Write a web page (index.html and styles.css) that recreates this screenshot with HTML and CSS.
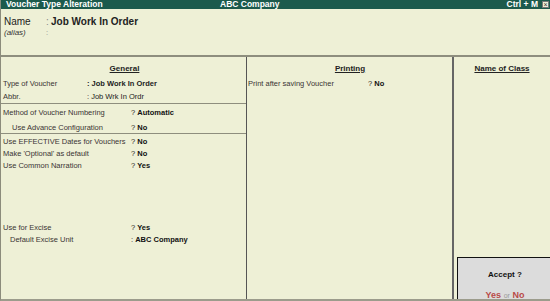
FILE: index.html
```html
<!doctype html>
<html lang="en">
<head>
    <meta charset="UTF-8">
    <title>Voucher Type Alteration</title>
    <link rel="stylesheet" href="styles.css">
</head>
<body>
<div class="win">
    <div class="titlebar">
        <span class="t-left">Voucher Type Alteration</span>
        <span class="t-mid">ABC Company</span>
        <span class="t-right">Ctrl + M <span class="close">&#215;</span></span>
    </div>
    <div class="head">
        <div class="nrow"><span class="nlab">Name</span><span class="ncol">:</span><span class="nval">Job Work In Order</span></div>
        <div class="arow"><span class="nlab alias">(alias)</span><span class="ncol">:</span></div>
    </div>
    <div class="cols">
        <div class="col gen">
            <div class="sec s1">
                <p class="ctitle">General</p>
                <div class="row"><span class="lab w84">Type of Voucher</span><span class="b">: Job Work In Order</span></div>
                <div class="row"><span class="lab w84">Abbr.</span><span>: Job Wrk In Ordr</span></div>
            </div>
            <div class="sec s2">
                <div class="row"><span class="lab w128">Method of Voucher Numbering</span><span>? <b>Automatic</b></span></div>
                <div class="row r2 ind"><span class="lab w119">Use Advance Configuration</span><span>? <b>No</b></span></div>
            </div>
            <div class="sec s3">
                <div class="row"><span class="lab w128">Use EFFECTIVE Dates for Vouchers</span><span>? <b>No</b></span></div>
                <div class="row"><span class="lab w128">Make 'Optional' as default</span><span>? <b>No</b></span></div>
                <div class="row"><span class="lab w128">Use Common Narration</span><span>? <b>Yes</b></span></div>
                <div class="row excise"><span class="lab w128">Use for Excise</span><span>? <b>Yes</b></span></div>
                <div class="row ind2"><span class="lab w121">Default Excise Unit</span><span>: <b>ABC Company</b></span></div>
            </div>
        </div>
        <div class="col prn">
            <p class="ctitle">Printing</p>
            <div class="row"><span class="lab w120">Print after saving Voucher</span><span>? <b>No</b></span></div>
        </div>
        <div class="col cls">
            <p class="ctitle">Name of Class</p>
        </div>
    </div>
    <div class="accept">
        <p class="q">Accept ?</p>
        <p class="yn"><b>Yes</b> <span class="or">or</span> <b>No</b></p>
    </div>
</div>
</body>
</html>
```

FILE: styles.css
```css
*{margin:0;padding:0;box-sizing:border-box;}
body{background:#eef0d6;font-family:"Liberation Sans",Arial,sans-serif;font-size:7.5px;color:#222;}
.win{width:550px;height:301px;position:relative;border-left:1px solid #8c8c7c;border-bottom:2px solid #9c9c8c;overflow:hidden;}
.titlebar{height:9px;background:#1c5a4c;color:#fff;font-weight:bold;font-size:8.5px;line-height:9px;display:flex;align-items:center;padding-left:5px;position:relative;}
.t-left{flex:1;}
.t-mid{position:absolute;left:219px;top:0;}
.t-right{display:flex;align-items:center;gap:4px;padding-right:1px;}
.close{display:inline-block;width:7px;height:7px;background:#eef0d6;color:#333;border:1px solid #777;font-size:7px;line-height:5px;text-align:center;font-weight:normal;}
.head{height:48px;padding:7px 0 0 3px;border-bottom:2px solid #8e8e7e;}
.nrow{display:flex;align-items:baseline;font-size:10px;line-height:12px;}
.nlab{width:42px;}
.ncol{width:5px;color:#888;}
.nval{font-weight:bold;font-size:10px;}
.arow{display:flex;line-height:9px;}
.alias{font-style:italic;font-size:8px;color:#333;}
.cols{display:flex;height:242px;}
.col{height:100%;padding-top:6px;}
.gen{width:246px;border-right:1px solid #555;padding-top:0;}
.prn{width:207px;border-right:2px solid #666;padding-left:1px;}
.cls{flex:1;}
.ctitle{text-align:center;font-weight:bold;font-size:8px;text-decoration:underline;color:#222;line-height:11px;}
.sec{padding-left:2px;}
.sec + .sec{border-top:1px solid #8e8e7e;}
.s1{height:46px;padding-top:6px;}
.s1 .ctitle{margin-bottom:3px;}
.row{display:flex;line-height:12px;white-space:nowrap;}
.s1 .row{line-height:13px;}
.lab{color:#3a3434;}
.w84{width:84px;}
.w128{width:128px;}
.w119{width:119px;}
.w121{width:121px;}
.w120{width:120px;}
.b{font-weight:bold;}
b{font-weight:bold;color:#111;}
.s2{height:30px;padding-top:3px;}
.r2{margin-top:3px;}
.ind{padding-left:9px;}
.ind2{padding-left:7px;}
.s3{padding-top:2px;}
.excise{margin-top:50px;}
.prn .ctitle{margin-bottom:3px;}
.prn .row{line-height:13px;}
.accept{position:absolute;left:456px;top:257px;width:95px;height:46px;background:#dcdcdc;border:1px solid #111;border-right:none;text-align:center;}
.accept .q{font-weight:bold;font-size:8px;margin-top:12px;color:#111;}
.accept .yn{margin-top:11px;font-size:9px;}
.accept .yn b{color:#b94a48;}
.accept .or{color:#999;font-size:7px;}
```
